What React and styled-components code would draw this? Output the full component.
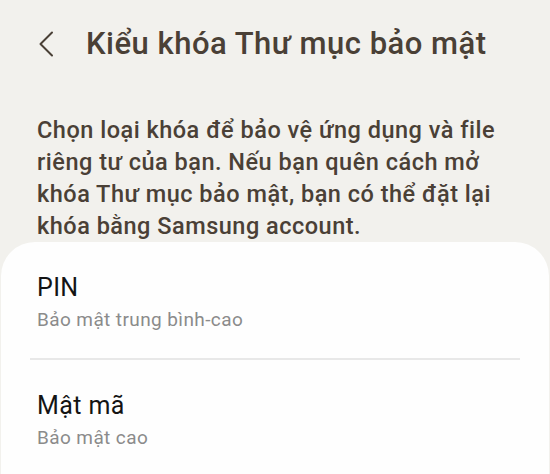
import styled, { createGlobalStyle } from "styled-components";

const Global = createGlobalStyle`
  html, body {
    margin: 0;
    padding: 0;
    background: #f2f1ed;
  }
  body {
    font-family: Roboto, "Noto Sans", sans-serif;
    -webkit-font-smoothing: antialiased;
  }
`;

const options = [
  { title: "PIN", desc: "Bảo mật trung bình-cao" },
  { title: "Mật mã", desc: "Bảo mật cao" },
];

const App = () => {
  return (
    <Page>
      <Global />
      <Header>
        <Back aria-label="Quay lại">
          <svg width="16" height="26" viewBox="0 0 16 26" fill="none">
            <path d="M14 1.5 L2.5 13 L14 24.5" stroke="#4a4036" strokeWidth="2" strokeLinecap="round" strokeLinejoin="round" />
          </svg>
        </Back>
        <Title>Kiểu khóa Thư mục bảo mật</Title>
      </Header>
      <Description>
        Chọn loại khóa để bảo vệ ứng dụng và file riêng tư của bạn. Nếu bạn quên cách mở khóa Thư mục bảo mật, bạn có thể đặt lại khóa bằng Samsung account.
      </Description>
      <Card>
        {options.map((o, i) => (
          <div key={o.title}>
            {i > 0 && <Divider />}
            <Item>
              <ItemTitle>{o.title}</ItemTitle>
              <ItemDesc>{o.desc}</ItemDesc>
            </Item>
          </div>
        ))}
      </Card>
    </Page>
  );
};

const Page = styled.div`
  width: 550px;
  min-height: 474px;
  overflow: hidden;
`;

const Header = styled.header`
  display: flex;
  align-items: center;
  gap: 32px;
  padding: 24px 0 0 38px;
  height: 40px;
`;

const Back = styled.div`
  display: flex;
  align-items: center;
  width: 16px;
  height: 26px;
`;

const Title = styled.h1`
  margin: 0;
  font-size: 31px;
  line-height: 40px;
  font-weight: 500;
  letter-spacing: 0.5px;
  color: #4a4036;
  white-space: nowrap;
`;

const Description = styled.p`
  margin: 50px 0 0;
  padding: 0 30px 0 37px;
  font-size: 23.5px;
  line-height: 32px;
  font-weight: 500;
  letter-spacing: 0.5px;
  color: #4a4036;
`;

const Card = styled.section`
  margin: 0 1px;
  background: #fefefe;
  border-radius: 34px 34px 0 0;
  min-height: 240px;
`;

const Item = styled.div`
  display: flex;
  flex-direction: column;
  gap: 4px;
  padding: 30px 36px 26px 36px;
`;

const ItemTitle = styled.div`
  font-size: 25px;
  line-height: 32px;
  letter-spacing: 0.4px;
  color: #141414;
`;

const ItemDesc = styled.div`
  font-size: 19px;
  line-height: 24px;
  letter-spacing: 0.4px;
  color: #8b8b8b;
`;

const Divider = styled.hr`
  margin: 0 29px;
  border: none;
  height: 2px;
  background: #e8e8e8;
`;

export default App;
